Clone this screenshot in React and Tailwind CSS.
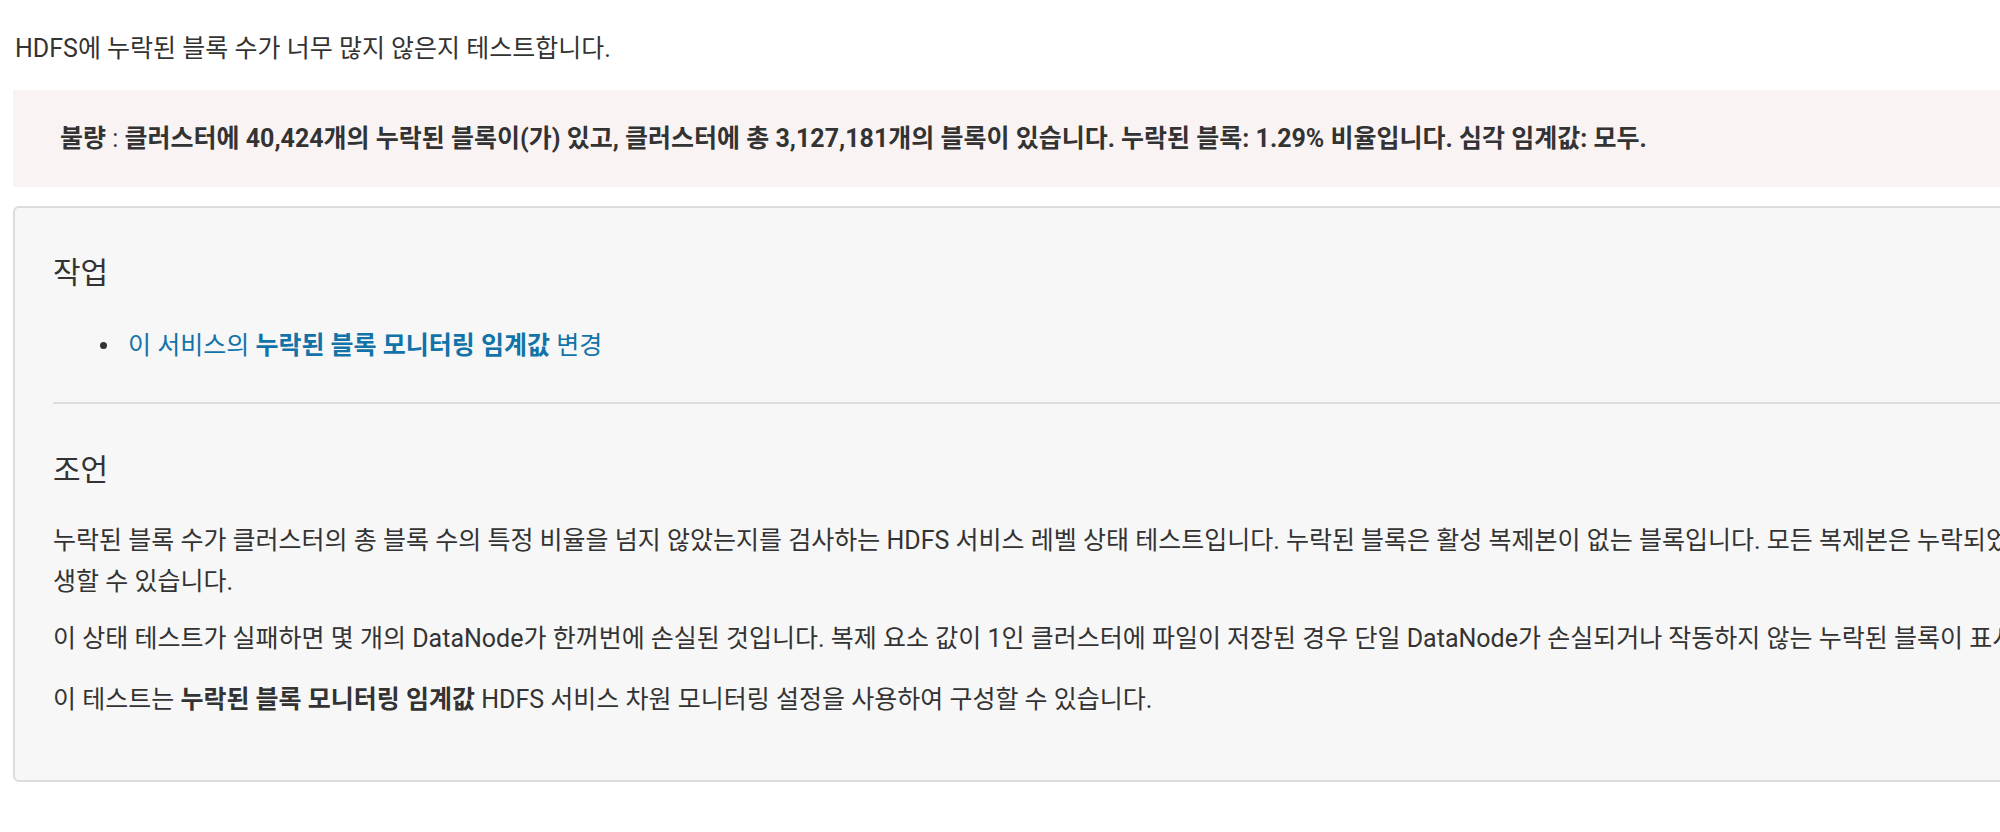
import React from 'react';

const font = { fontFamily: 'Roboto, "Noto Sans CJK KR", sans-serif' };

// Alert summary for the failed health test
const HealthAlert = () => (
    <div className="mt-[21px] bg-[#f9f3f3] py-[28px] pl-[47px] leading-[41px] whitespace-nowrap">
        <strong className="font-bold">불량</strong> : <strong className="font-bold">클러스터에 40,424개의 누락된 블록이(가) 있고, 클러스터에 총 3,127,181개의 블록이 있습니다. 누락된 블록: 1.29% 비율입니다. 심각 임계값: 모두.</strong>
    </div>
);

function App() {
    return (
        <div className="w-full overflow-hidden bg-white text-[#333333] text-[25px]" style={font}>
            <div className="w-[2464px] pl-[13px] pt-[28px] pb-[50px]">
                <p className="leading-[41px] pl-[2px]">HDFS에 누락된 블록 수가 너무 많지 않은지 테스트합니다.</p>

                <HealthAlert />

                <div className="mt-[19px] rounded-[6px] border-2 border-[#dcdcdc] bg-[#f7f7f7] px-[38px] pt-[45px] pb-[60px]">
                    {/* Actions */}
                    <h4 className="text-[30px] leading-[40px] font-normal">작업</h4>
                    <ul className="mt-[32px] pl-[47px] leading-[41px]">
                        <li className="flex items-center">
                            <span className="h-[7px] w-[7px] shrink-0 rounded-full bg-[#333333]" />
                            <a href="#" className="ml-[21px] text-[#1173a8]">
                                이 서비스의 <strong className="font-bold">누락된 블록 모니터링 임계값</strong> 변경
                            </a>
                        </li>
                    </ul>

                    <hr className="mt-[36px] border-0 border-t-2 border-[#dddddd]" />

                    {/* Advice */}
                    <h4 className="mt-[46px] text-[30px] leading-[40px] font-normal">조언</h4>
                    <p className="mt-[30px] leading-[41px]">
                        누락된 블록 수가 클러스터의 총 블록 수의 특정 비율을 넘지 않았는지를 검사하는 HDFS 서비스 레벨 상태 테스트입니다. 누락된 블록은 활성 복제본이 없는 블록입니다. 모든 복제본은 누락되었거나 손상되었습니다. 손상으로 인해 발생할 수 있습니다.
                    </p>
                    <p className="mt-[16px] leading-[41px]">
                        이 상태 테스트가 실패하면 몇 개의 DataNode가 한꺼번에 손실된 것입니다. 복제 요소 값이 1인 클러스터에 파일이 저장된 경우 단일 DataNode가 손실되거나 작동하지 않는 누락된 블록이 표시될 수 있습니다.
                    </p>
                    <p className="mt-[20px] leading-[41px]">
                        이 테스트는 <strong className="font-bold">누락된 블록 모니터링 임계값</strong> HDFS 서비스 차원 모니터링 설정을 사용하여 구성할 수 있습니다.
                    </p>
                </div>
            </div>
        </div>
    );
}

export default App;
